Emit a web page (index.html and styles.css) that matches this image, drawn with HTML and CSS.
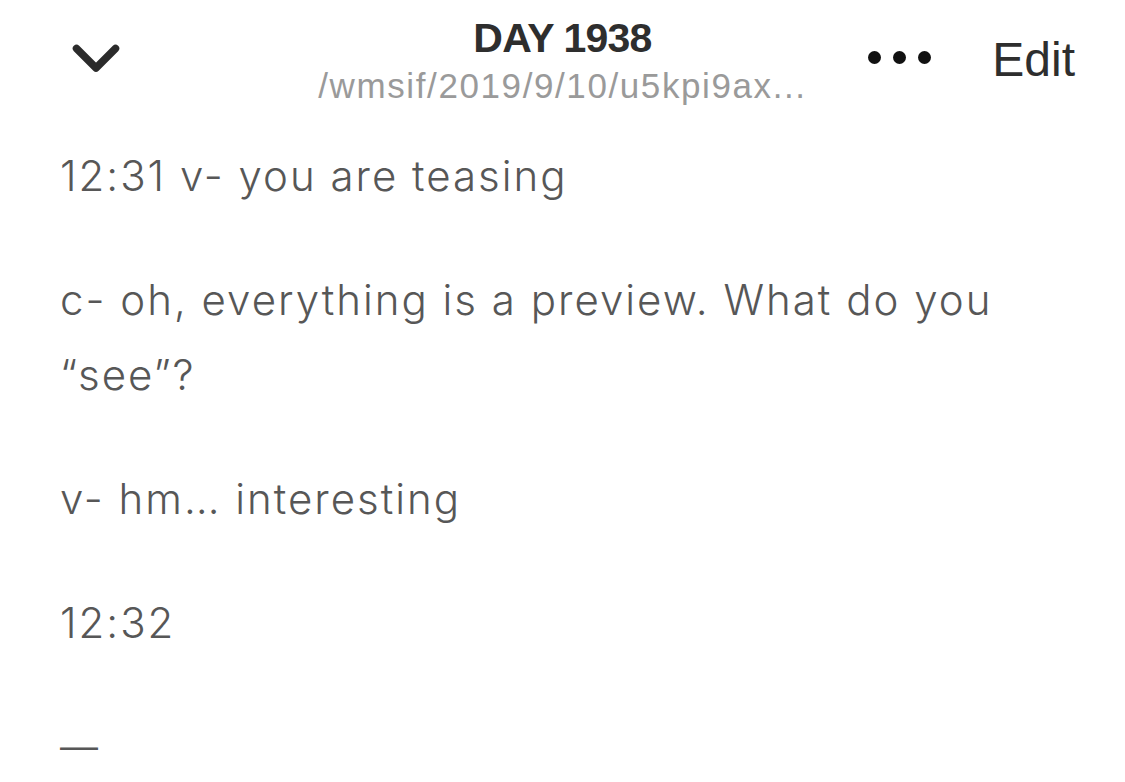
FILE: index.html
```html
<!DOCTYPE html>
<html>
<head>
<meta charset="utf-8">
<link rel="stylesheet" href="styles.css">
</head>
<body>
<header class="topbar">
  <div class="left">
    <svg class="chev" width="48" height="30" viewBox="0 0 48 30"><path d="M4.5 4.5 L24 24 L43.5 4.5" fill="none" stroke="#2b2b2b" stroke-width="7.5" stroke-linecap="round" stroke-linejoin="round"/></svg>
  </div>
  <div class="title">
    <div class="day">DAY 1938</div>
    <div class="path">/wmsif/2019/9/10/u5kpi9ax...</div>
  </div>
  <div class="right">
    <div class="dots"><span></span><span></span><span></span></div>
    <div class="edit">Edit</div>
  </div>
</header>
<main class="content">
  <p>12:31 v- you are teasing</p>
  <p>c- oh, everything is a preview. What do you “see”?</p>
  <p>v- hm… interesting</p>
  <p>12:32</p>
  <p class="dash">—</p>
</main>
</body>
</html>
```
FILE: styles.css
```css
html, body { margin: 0; padding: 0; background: #fff; }
body { width: 1125px; height: 782px; overflow: hidden; font-family: "Liberation Sans", Arial, sans-serif; }
.topbar { display: grid; grid-template-columns: 1fr auto 1fr; align-items: start; height: 138px; padding: 0 50px; box-sizing: border-box; }
.left { padding-top: 44px; padding-left: 22px; }
.chev { display: block; }
.title { text-align: center; padding-top: 14px; }
.day { font-weight: bold; font-size: 41px; color: #2e2e2e; letter-spacing: -0.8px; line-height: 48px; }
.path { font-size: 35px; color: #9a9a9a; line-height: 40px; margin-top: 4px; letter-spacing: 1.6px; }
.right { display: flex; align-items: center; justify-content: flex-end; padding-top: 32px; gap: 61px; }
.dots { display: flex; gap: 12px; margin-top: -6px; }
.dots span { width: 13px; height: 13px; border-radius: 50%; background: #111; }
.edit { font-size: 48px; color: #2e2e2e; line-height: 56px; }
.content { padding: 0 60px; font-family: Inter, sans-serif; font-weight: 300; font-size: 42px; color: #575757; line-height: 75px; letter-spacing: 2px; }
.content p { margin: 0 0 49px; }
.content .dash { font-family: "Liberation Sans", Arial, sans-serif; font-size: 38px; line-height: 64px; padding-top: 5px; margin-bottom: 0; }
```
